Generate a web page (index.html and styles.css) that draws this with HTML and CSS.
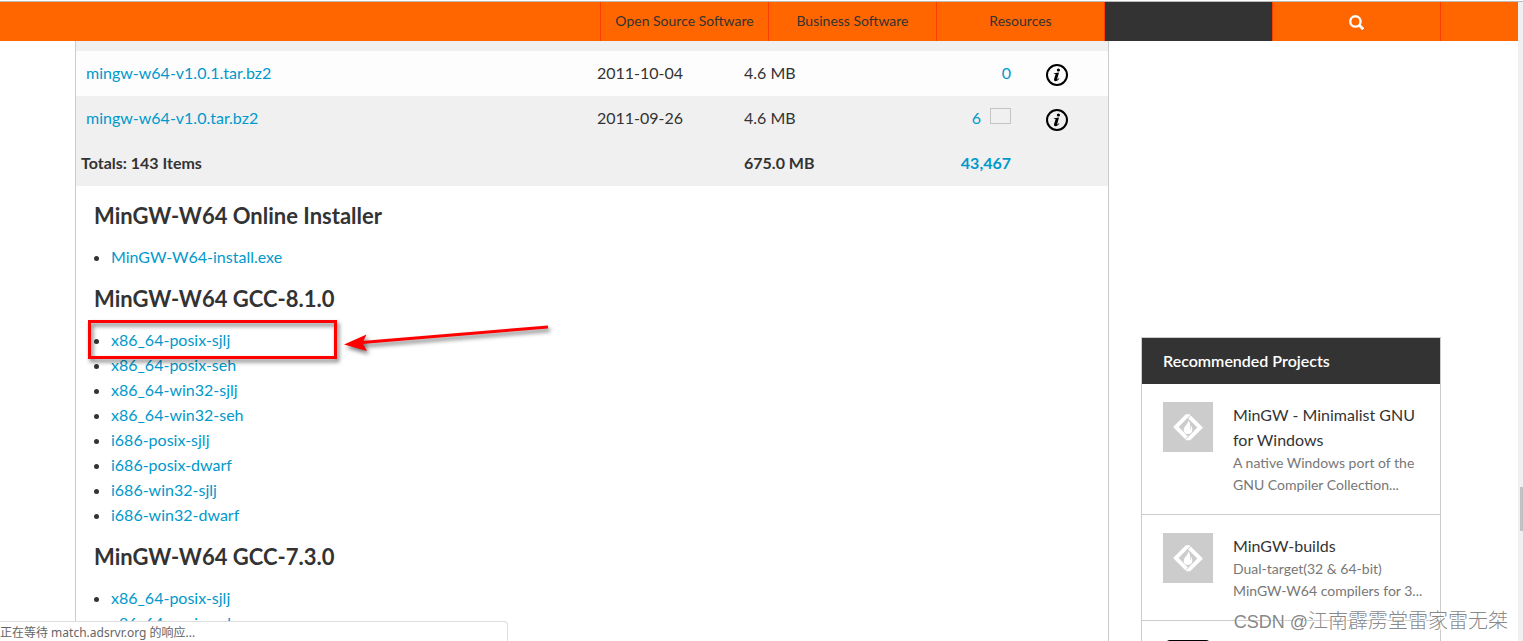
FILE: index.html
```html
<!DOCTYPE html>
<html lang="en">
<head>
<meta charset="utf-8">
<title>MinGW-w64 - Files</title>
<link rel="stylesheet" href="styles.css">
</head>
<body>
<svg class="defs" aria-hidden="true">
  <symbol id="info" viewBox="0 0 22 22">
    <circle cx="11" cy="11" r="10" fill="none" stroke="#000" stroke-width="2"/>
    <circle cx="12.4" cy="6" r="1.6"/>
    <path d="M7.8 9.2 13 8.6 11.2 15c-.2.8.3.8 1.6-.8l.6.4c-1.400 2-2.600 2.600-3.800 2.600-1.400 0-1.900-.9-1.500-2.200L9.500 10.500c.2-.6-.4-.7-1.800-.7z"/>
  </symbol>
  <symbol id="forge" viewBox="0 0 50 50">
    <path fill="#ccc" d="M0 0h50v50H0z"/>
    <path fill="#fff" d="M22.300 37.200 10.600 25.500a.8.8 0 0 1 0-1.100L22.800 12.200h4l.5.9L15.600 25l9.200 9.200-2.500 3z"/>
    <path fill="#fff" d="M27.700 13.400 39.400 25.100a.8.8 0 0 1 0 1.100L27.200 38.300h-4l-.5-.9L34.400 25.600l-9.200-9.200 2.500-3z"/>
    <path fill="#fff" d="M25.400 18.200c.4 3.200-4.700 6-4.700 9.800 0 2.400 1.900 4.100 4.300 4.100s4.300-1.900 4.300-4.400c0-2.200-.7-3.600-1.500-4.300.3 1.800.1 3.100-.8 4.300.5-3.900.2-7.200-1.600-9.500z"/>
  </symbol>
</svg>
<header class="topbar">
  <nav class="nav">
    <a class="nav-item" href="#">Open Source Software</a>
    <a class="nav-item" href="#">Business Software</a>
    <a class="nav-item" href="#">Resources</a>
    <span class="nav-item nav-dark"></span>
    <button class="nav-item" type="button" aria-label="Search">
      <svg class="search" viewBox="0 0 14 14"><circle cx="6" cy="6" r="4.800" fill="none" stroke="#fff" stroke-width="2.200"/><path d="m9.300 9.300 4 4" stroke="#fff" stroke-width="2.600"/></svg>
    </button>
    <span class="nav-item nav-end"></span>
  </nav>
</header>
<div class="viewport">
  <div class="page">
    <main class="main">
      <table class="files">
        <colgroup><col><col class="c-date"><col class="c-size"><col class="c-count"><col class="c-info"></colgroup>
        <tbody>
          <tr>
            <td class="name"><a href="#">mingw-w64-v1.0.1.tar.bz2</a></td>
            <td>2011-10-04</td><td>4.6 MB</td>
            <td class="count"><a href="#">0</a></td>
            <td class="info"><svg class="info-icon"><use href="#info"/></svg></td>
          </tr>
          <tr class="alt">
            <td class="name"><a href="#">mingw-w64-v1.0.tar.bz2</a></td>
            <td>2011-09-26</td><td>4.6 MB</td>
            <td class="count"><a href="#">6</a><span class="spark"></span></td>
            <td class="info"><svg class="info-icon"><use href="#info"/></svg></td>
          </tr>
        </tbody>
        <tfoot>
          <tr class="alt">
            <td>Totals: 143 Items</td><td></td><td>675.0 MB</td>
            <td class="count"><a href="#">43,467</a></td><td></td>
          </tr>
        </tfoot>
      </table>
      <section class="readme">
        <h2>MinGW-W64 Online Installer</h2>
        <ul>
          <li><a href="#">MinGW-W64-install.exe</a></li>
        </ul>
        <h2>MinGW-W64 GCC-8.1.0</h2>
        <ul>
          <li><a href="#">x86_64-posix-sjlj</a></li>
          <li><a href="#">x86_64-posix-seh</a></li>
          <li><a href="#">x86_64-win32-sjlj</a></li>
          <li><a href="#">x86_64-win32-seh</a></li>
          <li><a href="#">i686-posix-sjlj</a></li>
          <li><a href="#">i686-posix-dwarf</a></li>
          <li><a href="#">i686-win32-sjlj</a></li>
          <li><a href="#">i686-win32-dwarf</a></li>
        </ul>
        <h2>MinGW-W64 GCC-7.3.0</h2>
        <ul>
          <li><a href="#">x86_64-posix-sjlj</a></li>
          <li><a href="#">x86_64-posix-seh</a></li>
        </ul>
      </section>
    </main>
    <aside class="recommended">
      <h3>Recommended Projects</h3>
      <article class="project">
        <svg class="project-icon"><use href="#forge"/></svg>
        <div class="project-text">
          <a href="#">MinGW - Minimalist GNU for Windows</a>
          <p>A native Windows port of the GNU Compiler Collection...</p>
        </div>
      </article>
      <article class="project">
        <svg class="project-icon"><use href="#forge"/></svg>
        <div class="project-text">
          <a href="#">MinGW-builds</a>
          <p>Dual-target(32 &amp; 64-bit) MinGW-W64 compilers for 3...</p>
        </div>
      </article>
      <article class="project">
        <svg class="project-icon" viewBox="0 0 50 50"><rect x="2" y="1" width="46" height="48" rx="5"/></svg>
      </article>
    </aside>
  </div>
  <div class="scrollbar"><div class="thumb"></div></div>
</div>
<div class="mark-box"></div>
<svg class="mark-arrow" viewBox="0 0 220 40">
  <path d="M208 12 22 27.500" stroke="#f00" stroke-width="3"/>
  <path d="M4 29.500 26.500 19.500 22.500 28 27 36z" fill="#f00"/>
</svg>
<div class="status">正在等待 match.adsrvr.org 的响应...</div>
<div class="watermark"><span class="latin">CSDN @</span>江南霹雳堂雷家雷无桀</div>
</body>
</html>
```
FILE: styles.css
```css
* { box-sizing: border-box; }
body {
  margin: 0;
  height: 100vh;
  padding-top: 1px;
  display: flex;
  flex-direction: column;
  overflow: hidden;
  position: relative;
  background: #fff;
  color: #333;
  font: 16px/25px Lato, "Noto Sans CJK SC", sans-serif;
}
a { color: #09c; text-decoration: none; }
.defs { position: absolute; width: 0; height: 0; }

.topbar {
  flex: none;
  border-top: 1px solid #bbb;
  padding-right: 5px;
  background: #f0f0f0;
}
.nav {
  display: flex;
  justify-content: flex-end;
  height: 39px;
  background: #f60;
}
.nav-item {
  width: 168px;
  padding: 0;
  border: 0;
  border-left: 1px solid #ff3c00;
  background: none;
  color: #333;
  font-size: 14px;
  line-height: 37px;
  text-align: center;
}
.nav-dark { background: #333; }
.nav-end { width: 78px; }
.search { width: 15px; height: 15px; vertical-align: middle; }

.viewport { flex: 1; min-height: 0; display: flex; }
.page {
  flex: 1;
  display: flex;
  gap: 32px;
  padding: 0 77px 0 75px;
  overflow: hidden;
}
.main {
  flex: 1;
  padding-top: 10px;
  border: solid #ccc;
  border-width: 0 1px;
  background: linear-gradient(#f0f0f0 10px, #fff 10px);
}
.files { width: 100%; table-layout: fixed; border-collapse: collapse; background: #fdfdfd; }
.c-date, .c-size { width: 147px; }
.c-count { width: 130px; }
.c-info { width: 92px; }
.files td { height: 45px; padding: 0 5px 2px; }
.files .name { padding-left: 10px; }
.files .count { text-align: right; }
.files .info { padding: 3px 0 0 30px; }
.files .alt { background: #f0f0f0; }
.files tfoot { font-weight: 700; }
.info-icon { display: block; width: 22px; height: 22px; }
.spark {
  display: inline-block;
  width: 21px;
  height: 16px;
  margin-left: 9px;
  border: 1px solid #c4c4c4;
}
.readme { padding: 1px 18px; }
.readme h2 { margin: 0; padding: 13px 0 12px; font-size: 22px; line-height: 32px; font-weight: 700; }
.readme ul { margin: 0; padding: 0 0 1px 17px; }

.recommended {
  width: 300px;
  align-self: flex-start;
  margin-top: 296px;
  border: 1px solid #ccc;
}
.recommended h3 {
  margin: 0;
  padding: 0 21px;
  background: #333;
  color: #fff;
  font-size: 16px;
  font-weight: 600;
  line-height: 46px;
}
.project { display: flex; gap: 20px; padding: 18px 16px 18px 21px; }
.project + .project { border-top: 1px solid #ccc; }
.project-icon { flex: none; width: 50px; height: 50px; }
.project-text a { display: block; color: #333; }
.project-text p { margin: 0; color: #777; font-size: 14px; line-height: 22px; }

.scrollbar { width: 5px; padding: 446px 0 0 2px; background: #f0f0f0; }
.thumb { height: 44px; background: #c1c1c1; }

.mark-box {
  position: absolute;
  left: 88px;
  top: 320px;
  width: 249px;
  height: 39px;
  border: 3px solid #f00;
  filter: drop-shadow(2px 3px 2px rgba(0, 0, 0, .55));
}
.mark-arrow {
  position: absolute;
  left: 340px;
  top: 315px;
  width: 220px;
  height: 40px;
  overflow: visible;
  filter: drop-shadow(2px 3px 2px rgba(0, 0, 0, .55));
}
.status {
  position: absolute;
  left: 0;
  bottom: 0;
  width: 508px;
  height: 20px;
  border: solid #ddd;
  border-width: 1px 1px 0 0;
  border-top-right-radius: 4px;
  background: #fff;
  color: #666;
  font: 12px/22px "Noto Sans", "Noto Sans CJK SC", sans-serif;
}
.watermark {
  position: absolute;
  right: 15px;
  bottom: 5px;
  color: rgba(120, 120, 120, .9);
  font: 300 20px/28px "Liberation Sans", "Noto Sans CJK SC", sans-serif;
  text-shadow: 1px 1px 0 #fff;
}
.latin { font-size: 18px; }
```
